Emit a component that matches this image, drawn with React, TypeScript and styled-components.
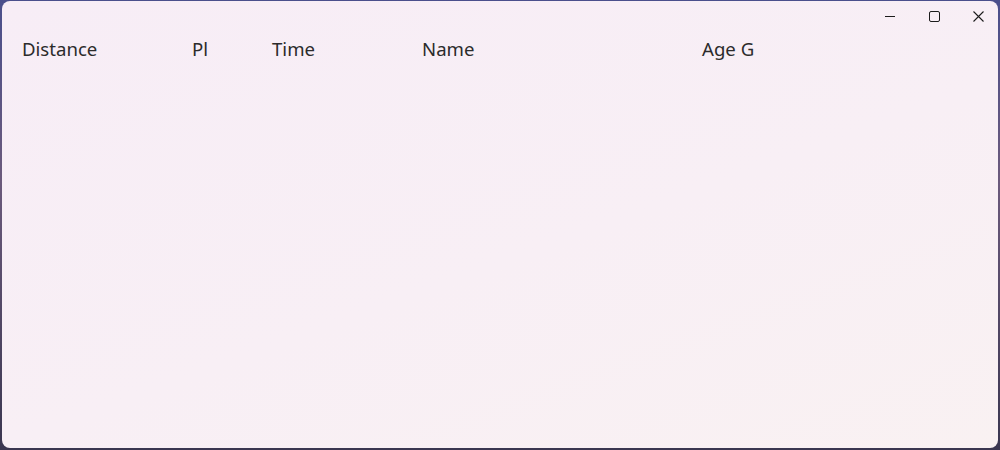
import React from "react";
import styled, { createGlobalStyle } from "styled-components";

const GlobalStyle = createGlobalStyle`
  html, body {
    margin: 0;
    padding: 0;
    width: 1000px;
    height: 450px;
    overflow: hidden;
    background: linear-gradient(180deg, #4a4f8c 0%, #6b5a7c 40%, #3a3650 100%);
    font-family: "Noto Sans", "Open Sans", sans-serif;
  }
`;

const Desktop = styled.div`
  width: 1000px;
  height: 450px;
  box-sizing: border-box;
  padding: 1px 2px 2px 2px;
  display: flex;
`;

const Window = styled.div`
  flex: 1;
  display: flex;
  flex-direction: column;
  border-radius: 8px;
  background: linear-gradient(160deg, #f7edf6 0%, #f8eff5 55%, #f9f1f2 100%);
  overflow: hidden;
`;

const TitleBar = styled.div`
  height: 30px;
  display: flex;
  justify-content: flex-end;
`;

const CaptionButton = styled.button`
  width: 44px;
  height: 30px;
  border: 0;
  padding: 0 0 0 4px;
  background: transparent;
  display: flex;
  align-items: center;
  justify-content: center;
  color: #1c1c1c;
`;

const HeaderRow = styled.div`
  display: grid;
  grid-template-columns: 170px 80px 150px 280px 1fr;
  padding: 4px 0 0 20px;
  color: #2b2b2b;
  font-size: 18.6px;
  line-height: 28px;
`;

const HeaderCell = styled.div`
  white-space: nowrap;
`;

const columns = ["Distance", "Pl", "Time", "Name", "Age G"];

export default function App() {
  return (
    <>
      <GlobalStyle />
      <Desktop>
        <Window>
          <TitleBar>
            <CaptionButton aria-label="Minimize">
              <svg width="10" height="10" viewBox="0 0 10 10">
                <path d="M0 5.5h10" stroke="currentColor" strokeWidth="1" />
              </svg>
            </CaptionButton>
            <CaptionButton aria-label="Maximize">
              <svg width="11" height="11" viewBox="0 0 11 11">
                <rect x="0.5" y="0.5" width="10" height="10" rx="1.5" fill="none" stroke="currentColor" strokeWidth="1" />
              </svg>
            </CaptionButton>
            <CaptionButton aria-label="Close">
              <svg width="11" height="11" viewBox="0 0 11 11">
                <path d="M0.5 0.5l10 10M10.5 0.5l-10 10" stroke="currentColor" strokeWidth="1.1" />
              </svg>
            </CaptionButton>
          </TitleBar>
          <HeaderRow>
            {columns.map((c) => (
              <HeaderCell key={c}>{c}</HeaderCell>
            ))}
          </HeaderRow>
        </Window>
      </Desktop>
    </>
  );
}
